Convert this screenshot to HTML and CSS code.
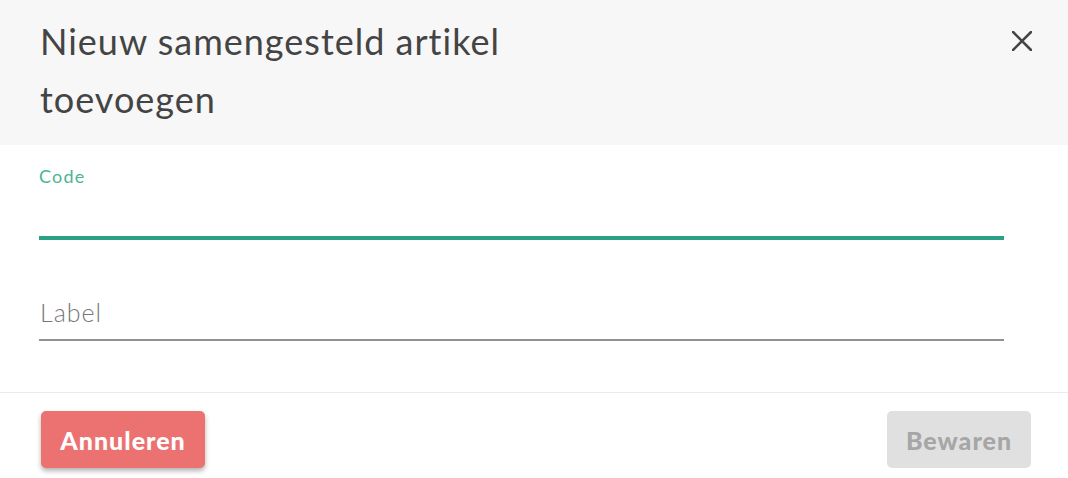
FILE: index.html
```html
<!DOCTYPE html>
<html lang="nl">
<head>
<meta charset="utf-8">
<title>Nieuw samengesteld artikel toevoegen</title>
<link rel="stylesheet" href="styles.css">
</head>
<body>
<div class="dialog">
  <header class="dialog-header">
    <h1 class="dialog-title">Nieuw samengesteld artikel toevoegen</h1>
    <button class="close-btn" aria-label="Sluiten">
      <svg width="20" height="20" viewBox="0 0 20 20"><path d="M1 1L19 19M19 1L1 19" stroke="#444" stroke-width="2.6" stroke-linecap="square"/></svg>
    </button>
  </header>
  <div class="dialog-body">
    <div class="field field-focused">
      <label class="field-label">Code</label>
      <div class="field-input"></div>
    </div>
    <div class="field">
      <div class="field-input"><span class="placeholder">Label</span></div>
    </div>
  </div>
  <footer class="dialog-footer">
    <button class="btn btn-cancel">Annuleren</button>
    <button class="btn btn-save" disabled>Bewaren</button>
  </footer>
</div>
</body>
</html>
```

FILE: styles.css
```css
* { box-sizing: border-box; }
html, body { margin: 0; padding: 0; background: #fff; }
body { font-family: Lato, "Noto Sans", sans-serif; color: #444; }

.dialog { width: 1068px; height: 478px; display: flex; flex-direction: column; }

.dialog-header {
  background: #f7f7f7;
  height: 145px;
  padding: 12px 36px 0 40px;
  display: flex;
  justify-content: space-between;
  align-items: flex-start;
}
.dialog-title {
  margin: 0;
  max-width: 560px;
  font-size: 36px;
  font-weight: 400;
  line-height: 58px;
  color: #444;
  letter-spacing: 1px;
}
.close-btn {
  border: 0;
  background: none;
  padding: 0;
  margin-top: 19px;
  width: 20px;
  height: 20px;
  cursor: pointer;
}
.close-btn svg { display: block; }

.dialog-body {
  padding: 20px 64px 0 39px;
  height: 248px;
  border-bottom: 1px solid #ebebeb;
}
.field { display: flex; flex-direction: column; }
.field-label {
  font-size: 18px;
  line-height: 22px;
  color: #4cb591;
  letter-spacing: 1.2px;
}
.field-input {
  height: 58px;
  border-bottom: 2px solid #919191;
  display: flex;
  align-items: flex-end;
  padding-bottom: 13px;
}
.field-focused .field-input {
  height: 53px;
  border-bottom: 4px solid #2ba084;
}
.field + .field { margin-top: 43px; }
.placeholder {
  font-size: 25px;
  font-weight: 300;
  color: #777;
  line-height: 28px;
  letter-spacing: 1px;
  padding-left: 1px;
}

.dialog-footer {
  flex: 1;
  display: flex;
  justify-content: space-between;
  align-items: flex-start;
  padding: 18px 37px 0 41px;
}
.btn {
  height: 57px;
  border: 0;
  border-radius: 5px;
  font-family: Lato, "Noto Sans", sans-serif;
  font-size: 25px;
  font-weight: 900;
  letter-spacing: 1px;
  padding: 0;
  cursor: pointer;
}
.btn-cancel {
  width: 164px;
  background: #ec7272;
  color: #fff;
  box-shadow: 0 3px 5px rgba(0,0,0,0.3);
}
.btn-save {
  width: 144px;
  background: #e0e0e0;
  color: #a6a6a6;
  cursor: default;
}
```
